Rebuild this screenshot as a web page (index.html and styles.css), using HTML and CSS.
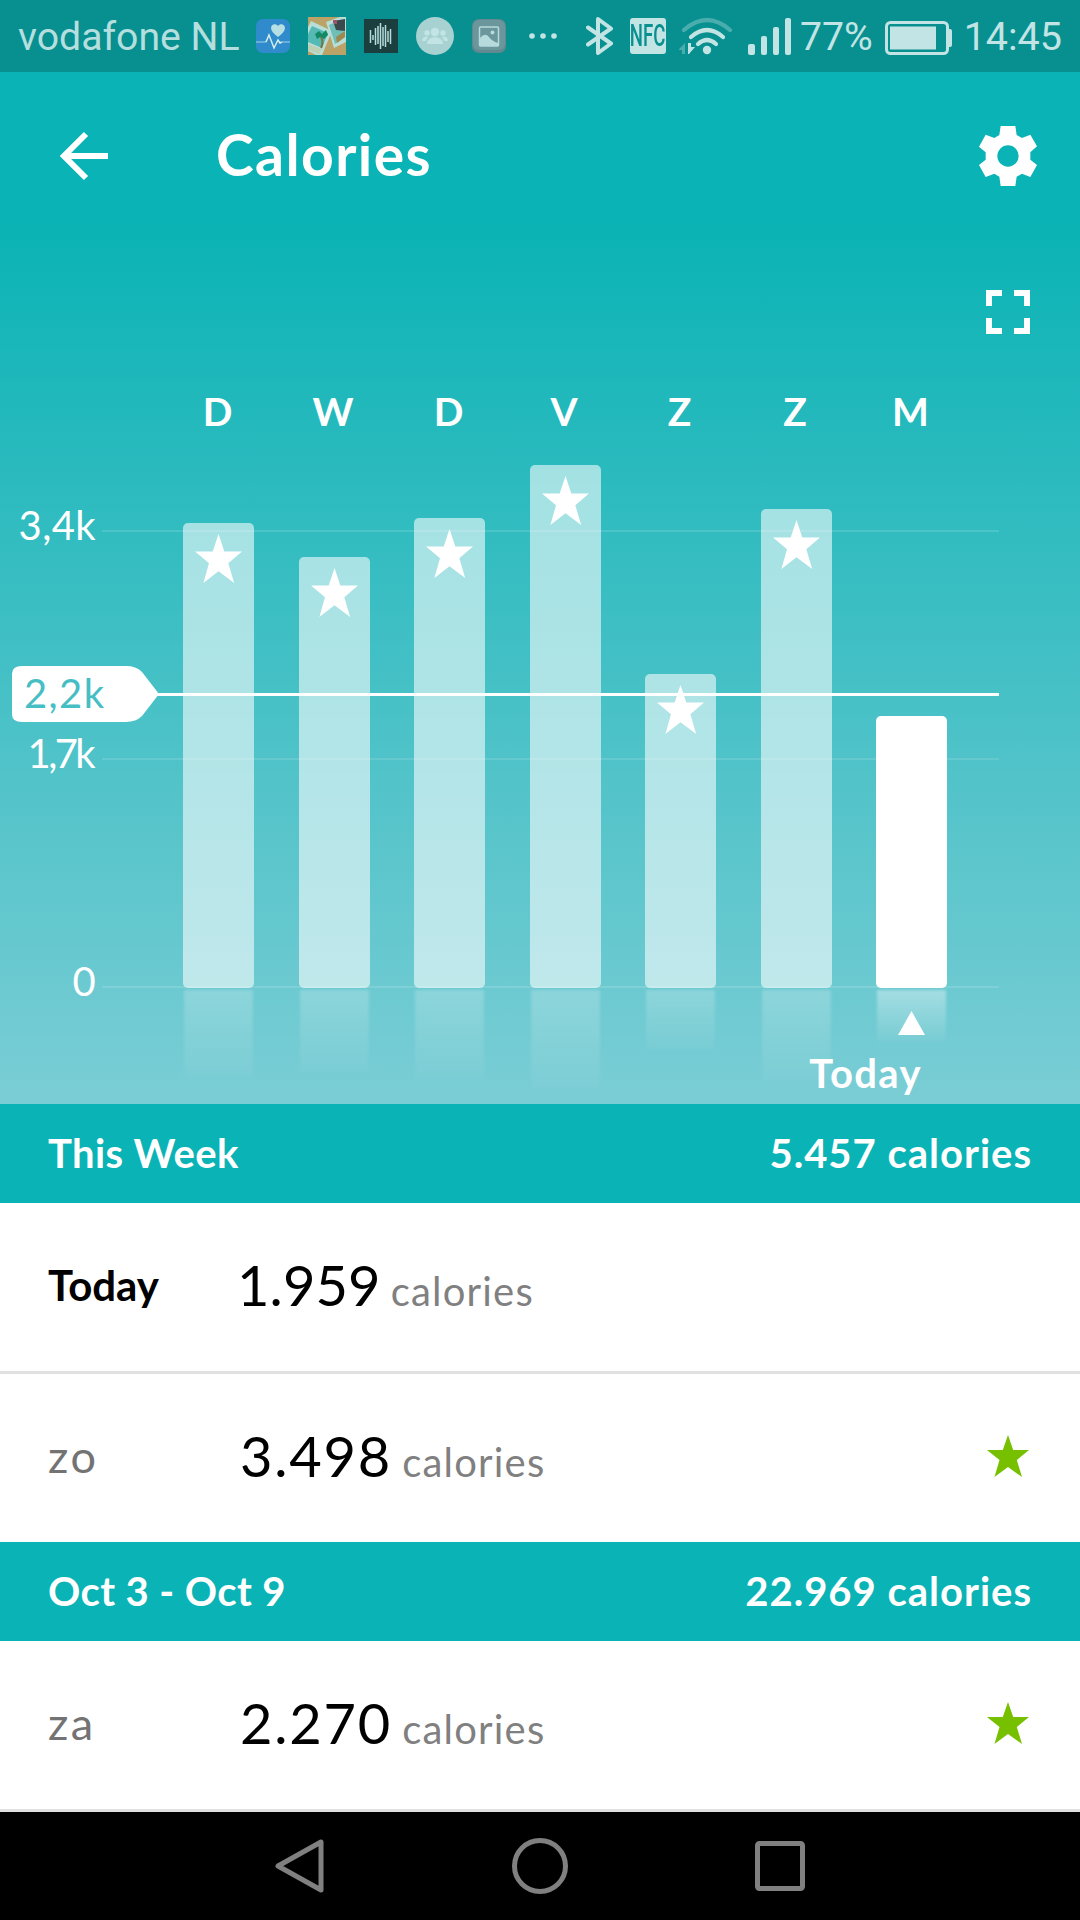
FILE: index.html
```html
<!DOCTYPE html>
<html lang="en">
  <head>
    <meta charset="UTF-8" />
    <meta name="viewport" content="width=device-width, initial-scale=1.0" />
    <title>Calories</title>
    <link rel="stylesheet" href="styles.css">
  </head>
  <body>
    <!-- shared star shape -->
    <svg class="defs" width="0" height="0">
      <symbol id="star" viewBox="0 0 42 42" preserveAspectRatio="none">
        <path d="M21 0L26.2 15H42L29.8 25L35 42L21 32L7.5 42L12.5 25L0 15H15.8Z" />
      </symbol>
    </svg>

    <div class="status-bar">
      <span class="carrier">vodafone NL</span>
      <div class="notifications">
        <svg width="34" height="34" viewBox="0 0 34 34">
          <rect width="34" height="34" rx="7" fill="#2f8bcb" />
          <path d="M0 23H10" stroke="#7dbce0" stroke-width="1.5" />
          <path d="M26 23H34" stroke="#7dbce0" stroke-width="1.5" />
          <path d="M22 18C18 15 15 12 15 9C15 5 20 4 22 7C24 4 29 5 29 9C29 12 26 15 22 18Z" fill="#b5dfe3" />
          <path d="M10 23L13 16L18 29L22 21L24 24L26 23" fill="none" stroke="#d5eef0" stroke-width="1.5" />
        </svg>
        <svg width="38" height="38" viewBox="0 0 38 38">
          <rect width="38" height="38" fill="#bba266" />
          <path d="M3 4L24 14L14 38H8L0 34V10Z" fill="#b9ded8" />
          <path d="M4 9L20 16L14 31L0 25V17Z" fill="#55b9b4" />
          <path d="M0 27L14 32L11 37L0 33Z" fill="#bdd0b4" />
          <path d="M18 5L32 0H38V25L26 31Z" fill="#b9ded8" />
          <path d="M21 8L33 3L37 20L27 27Z" fill="#6fbeb8" />
          <path d="M25 4L37 2V14L28 13Z" fill="#3a4a4c" />
          <path d="M25 3H29V7H26Z" fill="#a1506e" />
          <path d="M28 20L37 14V20L29 26Z" fill="#9d8850" />
          <path d="M7 17L11 14L14 17L18 13L20 18L16 22L12 20L9 22Z" fill="#138a65" />
          <path d="M13 20Q16 25 13 31" fill="none" stroke="#7b7440" stroke-width="2" />
        </svg>
        <svg width="34" height="34" viewBox="0 0 34 34">
          <rect width="34" height="34" fill="#1b3e3f" />
          <path d="M6.500 11V24M9 16V21M11.500 9V26M14 7V25M16.500 4V30M19 8V27M21.500 6V28M24 12V23M26.500 10V25" stroke="#b6dcdc" stroke-width="1.5" />
        </svg>
        <svg width="38" height="38" viewBox="0 0 38 38">
          <circle cx="19" cy="19" r="19" fill="#a8d2d2" />
          <g fill="#c2e4e4">
            <circle cx="19" cy="15" r="4.200" />
            <circle cx="11" cy="16" r="2.700" />
            <circle cx="27" cy="16" r="2.700" />
            <path d="M11 27C11 18 27 18 27 27Z" />
            <path d="M6 24C6 20 9 19 12 20L9.500 24Z" />
            <path d="M32 24C32 20 29 19 26 20L28.500 24Z" />
          </g>
        </svg>
        <svg width="34" height="34" viewBox="0 0 34 34">
          <rect width="34" height="34" rx="7" fill="#61898f" />
          <rect x="1" y="1" width="32" height="30" rx="6" fill="#6b969b" />
          <rect x="7.500" y="8" width="19" height="19" rx="1" fill="none" stroke="#b7dadc" stroke-width="1.500" />
          <path d="M8 19Q13 13 17 18Q20 22 26 24V27H8Z" fill="#b7dadc" />
          <circle cx="20.500" cy="13.500" r="2" fill="#b7dadc" />
        </svg>
        <svg class="more" width="28" height="8" viewBox="0 0 28 8" fill="#c2e4e4">
          <circle cx="3" cy="4" r="2.800" />
          <circle cx="14" cy="4" r="2.800" />
          <circle cx="25" cy="4" r="2.800" />
        </svg>
      </div>
      <div class="system">
        <svg width="28" height="38" viewBox="0 0 28 38">
          <path d="M2 10.500L25 26.500L12 36V2L25 11.500L2 27.500" fill="none" stroke="#c2e4e4" stroke-width="4" stroke-linejoin="round" stroke-linecap="round" />
        </svg>
        <span class="nfc"><span>NFC</span></span>
        <svg class="wifi" width="54" height="38" viewBox="1 0 54 38">
          <g fill="none" stroke="#c2e4e4" stroke-width="4.200" stroke-linecap="round">
            <path d="M6 13Q29 -7 52 13" opacity=".35" />
            <path d="M13 20Q29 6 45 20" />
            <path d="M20 27Q29 19 38 27" />
          </g>
          <circle cx="29" cy="33" r="4.200" fill="#c2e4e4" />
          <path d="M7 26V37H4V33H0Z" fill="#c2e4e4" opacity=".35" />
          <path d="M10 26H13V30H17L11 37H10Z" fill="#c2e4e4" />
        </svg>
        <svg class="signal" width="44" height="37" viewBox="0 0 44 37" fill="#c2e4e4">
          <rect y="26" width="7" height="11" rx="2" />
          <rect x="13" y="18" width="6" height="19" rx="2" />
          <rect x="25" y="9" width="6" height="28" rx="2" />
          <rect x="37" width="6" height="37" rx="2" />
        </svg>
        <span class="percent">77%</span>
        <svg class="battery" width="67" height="34" viewBox="0 0 67 34">
          <rect x="1.500" y="1.500" width="61" height="31" rx="4" fill="none" stroke="#c2e4e4" stroke-width="3" />
          <rect x="5" y="5.500" width="46" height="23" fill="#c2e4e4" />
          <path d="M63 8H65Q67 8 67 10V24Q67 26 65 26H63Z" fill="#c2e4e4" />
        </svg>
        <span class="clock">14:45</span>
      </div>
    </div>

    <div class="hero">
      <div class="app-bar">
        <svg width="48" height="50" viewBox="0 0 48 50">
          <path d="M26 3L4 25L26 47M4 25H48" fill="none" stroke="#fff" stroke-width="6" />
        </svg>
        <h1>Calories</h1>
        <svg class="gear" width="58" height="60" viewBox="0 0 174 180">
          <path fill="#fff" fill-rule="evenodd" d="M65 0H109L113 27L129 36L154 26L174 61L154 79V101L174 117L154 153L129 143L113 152L109 180H65L61 152L46 143L20 153L0 117L20 101V79L0 62L20 26L46 36L61 27ZM87 58A32 32 0 1 0 87 122A32 32 0 1 0 87 58Z" />
        </svg>
      </div>

      <div class="tools">
        <svg width="44" height="44" viewBox="0 0 44 44">
          <path d="M3 16V3H16M28 3H41V16M41 28V41H28M16 41H3V28" fill="none" stroke="#fff" stroke-width="6" />
        </svg>
      </div>

      <div class="weekdays">
        <span>D</span><span>W</span><span>D</span><span>V</span><span>Z</span><span>Z</span><span>M</span>
      </div>

      <div class="plot">
        <div class="grid-line" style="top: 66px"><span>3,4k</span><i></i></div>
        <div class="grid-line tight" style="top: 294px"><span>1,7k</span><i></i></div>
        <div class="grid-line" style="top: 522px"><span>0</span><i></i></div>
        <div class="bars">
          <div class="bar" style="height: 465px"><svg><use href="#star" /></svg></div>
          <div class="bar" style="height: 431px"><svg><use href="#star" /></svg></div>
          <div class="bar" style="height: 470px"><svg><use href="#star" /></svg></div>
          <div class="bar" style="height: 523px"><svg><use href="#star" /></svg></div>
          <div class="bar" style="height: 314px"><svg><use href="#star" /></svg></div>
          <div class="bar" style="height: 479px"><svg><use href="#star" /></svg></div>
          <div class="bar current" style="height: 272px"></div>
        </div>
        <div class="goal">
          <svg width="147" height="56" viewBox="0 0 147 57" preserveAspectRatio="none">
            <path d="M10 0H114Q124 0 130 6L147 28.500L130 51Q124 57 114 57H10Q0 57 0 49V8Q0 0 10 0Z" fill="#fff" />
          </svg>
          <span>2,2k</span>
          <i></i>
        </div>
      </div>

      <div class="today-marker">
        <svg width="27" height="24" viewBox="0 0 27 24"><path d="M13.500 0L27 24H0Z" fill="#fff" /></svg>
        <span>Today</span>
      </div>
    </div>

    <div class="section-head">
      <span>This Week</span>
      <span class="total">5.457 calories</span>
    </div>
    <div class="row divided">
      <span class="day today">Today</span>
      <span class="value narrow">1.959</span>
      <span class="unit">calories</span>
    </div>
    <div class="row">
      <span class="day">zo</span>
      <span class="value">3.498</span>
      <span class="unit">calories</span>
      <svg class="goal-star"><use href="#star" /></svg>
    </div>

    <div class="section-head">
      <span>Oct 3 - Oct 9</span>
      <span class="total">22.969 calories</span>
    </div>
    <div class="row divided">
      <span class="day">za</span>
      <span class="value">2.270</span>
      <span class="unit">calories</span>
      <svg class="goal-star"><use href="#star" /></svg>
    </div>

    <div class="nav-bar">
      <svg width="49" height="56" viewBox="0 0 49 56">
        <path d="M46 4V52L3 28Z" />
      </svg>
      <svg width="56" height="56" viewBox="0 0 56 56">
        <circle cx="28" cy="28" r="25.500" />
      </svg>
      <svg width="50" height="50" viewBox="0 0 50 50">
        <rect x="2.500" y="2.500" width="45" height="45" rx="2" />
      </svg>
    </div>
  </body>
</html>
```
FILE: styles.css
```css
* {
  box-sizing: border-box;
}

body {
  margin: 0;
  width: 1080px;
  height: 1920px;
  overflow: hidden;
  background: #fff;
  font-family: Lato, sans-serif;
  font-size: 40px;
}

svg {
  display: block;
  flex-shrink: 0;
}

.defs {
  position: absolute;
}

/* status bar */
.status-bar {
  display: flex;
  justify-content: space-between;
  align-items: center;
  height: 72px;
  padding: 0 18px 0 18px;
  background: #088f8f;
  color: #b5dfdf;
  font-family: Roboto, sans-serif;
  font-size: 39.2px;
  line-height: 72px;
}

.carrier {
  width: 238px;
  padding-top: 1px;
}

.notifications {
  display: flex;
  align-items: center;
  gap: 18px;
}

.notifications .more {
  margin-left: 5px;
}

.system {
  display: flex;
  align-items: center;
  margin-left: auto;
  color: #c2e4e4;
}

.nfc {
  display: flex;
  align-items: center;
  justify-content: center;
  width: 36px;
  height: 36px;
  margin-left: 16px;
  border-radius: 3px;
  background: #c2e4e4;
  color: #088f8f;
  font-size: 31px;
  font-weight: 500;
}

.nfc span {
  transform: scaleX(0.6);
}

.wifi {
  margin-left: 13px;
}

.signal {
  margin-left: 15px;
}

.percent {
  margin-left: 8px;
  padding-top: 2px;
}

.battery {
  margin: 3px 12px 0 12px;
}

.clock {
  padding-top: 2px;
  font-size: 39.5px;
}

/* header + chart */
.hero {
  display: flex;
  flex-direction: column;
  height: 1032px;
  background: linear-gradient(#0ab3b5 0, #0ab3b5 150px, #7bcdd5 1032px);
  color: #fff;
}

.app-bar {
  display: flex;
  align-items: center;
  height: 168px;
  padding: 0 43px 0 60px;
}

.app-bar h1 {
  margin: 0 0 4px 108px;
  font-size: 57px;
  font-weight: 700;
  letter-spacing: 1.4px;
}

.gear {
  margin-left: auto;
}

.tools {
  display: flex;
  justify-content: flex-end;
  padding: 50px 50px 0 0;
}

.weekdays {
  display: flex;
  gap: 44.5px;
  height: 50px;
  margin: 52px 0 0 182px;
  line-height: 50px;
  font-weight: 700;
  font-size: 39px;
}

.weekdays span {
  width: 71px;
  text-align: center;
}

.plot {
  position: relative;
  height: 523px;
  margin-top: 29px;
}

.bars {
  display: flex;
  align-items: flex-end;
  gap: 44.5px;
  height: 523px;
  padding-left: 183px;
}

.bar {
  position: relative;
  width: 71px;
  padding: 11px 0 0 12px;
  border-radius: 5px;
  background: rgba(255, 255, 255, 0.57);
}

.bar svg {
  width: 47px;
  height: 49px;
  fill: #fff;
}

/* reflection under the baseline */
.bar::after {
  content: "";
  position: absolute;
  top: calc(100% + 2px);
  left: 1px;
  right: 1px;
  height: 19%;
  background: linear-gradient(rgba(255, 255, 255, 0.22), rgba(255, 255, 255, 0.03));
  filter: blur(1.5px);
}

.bar.current {
  background: #fff;
}

.bar.current::after {
  background: linear-gradient(rgba(255, 255, 255, 0.38), rgba(255, 255, 255, 0.03));
}

.grid-line {
  position: absolute;
  left: 0;
  display: flex;
  align-items: center;
  width: 999px;
  height: 0;
}

.grid-line span {
  width: 96px;
  margin-right: 6px;
  padding-bottom: 12px;
  text-align: right;
  letter-spacing: 0.4px;
}

.grid-line.tight span {
  padding-right: 3px;
  letter-spacing: -2.6px;
}

.grid-line i {
  flex: 1;
  height: 2px;
  background: rgba(255, 255, 255, 0.13);
}

.goal {
  position: absolute;
  top: 201px;
  left: 12px;
  display: flex;
  align-items: center;
  width: 987px;
  height: 56px;
}

.goal span {
  width: 135px;
  margin-left: -135px;
  padding-bottom: 2px;
  color: #45bec4;
  letter-spacing: 1.4px;
}

.goal i {
  flex: 1;
  height: 3px;
  margin-left: -3px;
  background: #fff;
}

.today-marker {
  display: flex;
  flex-direction: column;
  align-items: flex-end;
  position: relative;
  padding: 23px 158px 0 0;
  font-weight: 700;
  letter-spacing: 1.4px;
  line-height: 50px;
}

.today-marker svg {
  margin-right: -3px;
}

.today-marker span {
  margin-top: 13px;
}

/* day list */
.section-head {
  display: flex;
  justify-content: space-between;
  align-items: center;
  height: 99px;
  padding: 0 48px 2px;
  background: #0ab3b5;
  color: #fff;
  font-weight: 700;
  letter-spacing: 0.4px;
}

.total {
  letter-spacing: 1px;
}

.row {
  display: flex;
  align-items: center;
  height: 168px;
  padding: 0 51px 5px 48px;
}

.row.divided {
  height: 171px;
  border-bottom: 3px solid #e0e0e0;
}

.day {
  width: 192px;
  color: #737373;
  font-size: 45px;
  letter-spacing: 2.5px;
}

.day.today {
  color: #000;
  font-size: 42px;
  font-weight: 700;
  letter-spacing: 0;
}

.value {
  color: #000;
  font-size: 56px;
  line-height: 56px;
  letter-spacing: 1.8px;
}

.value.narrow {
  margin-left: -3px;
  letter-spacing: 0.1px;
}

.unit {
  margin: 13px 0 0 10px;
  color: #808080;
  letter-spacing: 1.2px;
}

.goal-star {
  width: 42px;
  height: 42px;
  margin-left: auto;
  fill: #76c000;
}

/* android navigation */
.nav-bar {
  display: flex;
  align-items: center;
  gap: 187.5px;
  height: 108px;
  padding-left: 275px;
  background: #000;
}

.nav-bar svg {
  fill: none;
  stroke: #808080;
  stroke-width: 5;
  stroke-linejoin: round;
}
```
